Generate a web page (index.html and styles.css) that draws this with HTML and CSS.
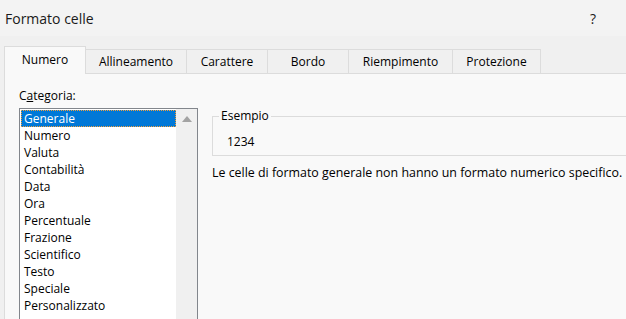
FILE: index.html
```html
<!DOCTYPE html>
<html lang="it">
<head>
    <meta charset="UTF-8">
    <meta name="viewport" content="width=device-width, initial-scale=1.0">
    <title>Formato celle</title>
    <link rel="stylesheet" href="styles.css">
</head>
<body>
    <div class="dialog">
        <div class="titlebar">
            <span class="title">Formato celle</span>
            <span class="help">?</span>
        </div>

        <div class="tabs">
            <div class="tab active tab-numero">Numero</div>
            <div class="tab tab-allineamento">Allineamento</div>
            <div class="tab tab-carattere">Carattere</div>
            <div class="tab tab-bordo">Bordo</div>
            <div class="tab tab-riempimento">Riempimento</div>
            <div class="tab tab-protezione">Protezione</div>
        </div>

        <div class="pane">
            <div class="category">
                <label class="category-label">C<u>a</u>tegoria:</label>
                <div class="listbox">
                    <ul class="items">
                        <li class="selected"><span>Generale</span></li>
                        <li>Numero</li>
                        <li>Valuta</li>
                        <li>Contabilità</li>
                        <li>Data</li>
                        <li>Ora</li>
                        <li>Percentuale</li>
                        <li>Frazione</li>
                        <li>Scientifico</li>
                        <li>Testo</li>
                        <li>Speciale</li>
                        <li>Personalizzato</li>
                    </ul>
                    <div class="scrollbar">
                        <svg class="arrow" width="10" height="6" viewBox="0 0 10 6">
                            <polygon points="0,6 5,0 10,6" fill="#a3a3a3"/>
                        </svg>
                    </div>
                </div>
            </div>

            <div class="details">
                <fieldset class="sample">
                    <legend>Esempio</legend>
                    <div class="sample-value">1234</div>
                </fieldset>
                <p class="description">Le celle di formato generale non hanno un formato numerico specifico.</p>
            </div>
        </div>
    </div>
</body>
</html>
```

FILE: styles.css
```css
body {
    margin: 0;
    width: 626px;
    height: 319px;
    overflow: hidden;
    background-color: #f0f0f0;
    font-family: "Open Sans", "Noto Sans", sans-serif;
    font-size: 12px;
    color: #000;
}
.dialog {
    display: flex;
    flex-direction: column;
    width: 626px;
    height: 319px;
    overflow: hidden;
}
.titlebar {
    flex: none;
    height: 36px;
    display: flex;
    align-items: center;
    justify-content: space-between;
    padding-left: 5px;
    background-color: #f3f3f3;
}
.title {
    font-size: 14px;
    color: #1a1a1a;
}
.help {
    font-size: 14px;
    margin-right: 30px;
    color: #1a1a1a;
}
.tabs {
    flex: none;
    display: flex;
    align-items: flex-end;
    height: 37px;
    padding-left: 4px;
    position: relative;
    z-index: 1;
}
.tab {
    box-sizing: border-box;
    height: 24px;
    display: flex;
    align-items: center;
    justify-content: center;
    border: 1px solid #dcdcdc;
    border-left: none;
    border-bottom: none;
    background-color: #f0f0f0;
    color: #000;
}
.tab.active {
    height: 28px;
    margin-bottom: -1px;
    border-left: 1px solid #dcdcdc;
    background-color: #f9f9f9;
    padding-bottom: 3px;
}
.tab-numero { width: 82px; }
.tab-allineamento { width: 101px; }
.tab-carattere { width: 81px; }
.tab-bordo { width: 81px; }
.tab-riempimento { width: 104px; }
.tab-protezione { width: 88px; }

.pane {
    flex: 1;
    display: flex;
    gap: 14px;
    margin-left: 4px;
    padding: 13px 0 0 14px;
    border-top: 1px solid #dcdcdc;
    border-left: 1px solid #dcdcdc;
    background-color: #f9f9f9;
    min-height: 0;
}
.category {
    flex: none;
    display: flex;
    flex-direction: column;
    width: 179px;
}
.category-label {
    flex: none;
    height: 21px;
    line-height: 18px;
}
.listbox {
    flex: none;
    display: flex;
    height: 240px;
    border: 1px solid #82868c;
    background-color: #fff;
}
.items {
    list-style: none;
    margin: 0;
    padding: 1px 0 0 1px;
    flex: 1;
}
.items li {
    height: 17px;
    line-height: 17px;
    padding-left: 3px;
}
.items li.selected {
    box-sizing: border-box;
    height: 17px;
    padding-left: 2px;
    line-height: 15px;
    background-color: #0078d7;
    color: #fff;
    border: 1px dotted #f2a03c;
}
.scrollbar {
    width: 21px;
    background-color: #f0f0f0;
    display: flex;
    justify-content: center;
    padding-top: 7px;
    box-sizing: border-box;
}
.details {
    flex: none;
    display: flex;
    flex-direction: column;
    width: 440px;
    padding-top: 20px;
}
.sample {
    flex: none;
    margin: 0;
    padding: 8px 0 4px 14px;
    border: 1px solid #dcdcdc;
}
.sample legend {
    padding: 0 2px;
    margin-left: -8px;
    line-height: 18px;
}
.sample-value {
    line-height: 18px;
}
.description {
    flex: none;
    margin: 8px 0 0 0;
    line-height: 18px;
    font-size: 12.4px;
}
```
